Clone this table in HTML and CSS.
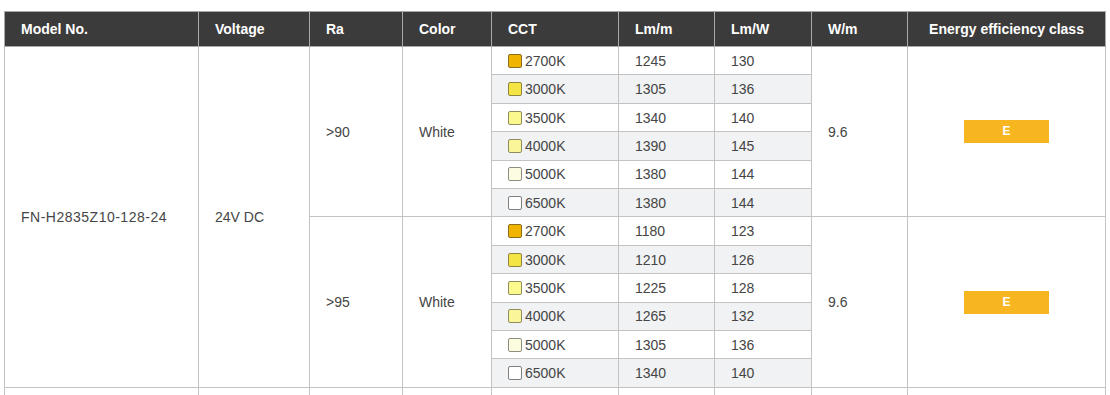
FILE: index.html
```html
<!DOCTYPE html>
<html>
<head>
<meta charset="utf-8">
<link rel="stylesheet" href="styles.css">
</head>
<body>
<div class="wrap">
<table class="spec">
  <colgroup>
    <col class="c-model"><col class="c-volt"><col class="c-ra"><col class="c-color"><col class="c-cct"><col class="c-lmm"><col class="c-lmw"><col class="c-wm"><col class="c-eec">
  </colgroup>
  <thead>
    <tr>
      <th>Model No.</th><th>Voltage</th><th>Ra</th><th>Color</th><th>CCT</th><th>Lm/m</th><th>Lm/W</th><th>W/m</th><th class="center">Energy efficiency class</th>
    </tr>
  </thead>
  <tbody>
    <tr>
      <td rowspan="12" class="model">FN-H2835Z10-128-24</td>
      <td rowspan="12">24V DC</td>
      <td rowspan="6">&gt;90</td>
      <td rowspan="6">White</td>
      <td><span class="sw k2700"></span>2700K</td><td>1245</td><td>130</td>
      <td rowspan="6">9.6</td>
      <td rowspan="6" class="center"><span class="badge">E</span></td>
    </tr>
    <tr class="alt"><td><span class="sw k3000"></span>3000K</td><td>1305</td><td>136</td></tr>
    <tr><td><span class="sw k3500"></span>3500K</td><td>1340</td><td>140</td></tr>
    <tr class="alt"><td><span class="sw k4000"></span>4000K</td><td>1390</td><td>145</td></tr>
    <tr><td><span class="sw k5000"></span>5000K</td><td>1380</td><td>144</td></tr>
    <tr class="alt"><td><span class="sw k6500"></span>6500K</td><td>1380</td><td>144</td></tr>
    <tr>
      <td rowspan="6">&gt;95</td>
      <td rowspan="6">White</td>
      <td><span class="sw k2700"></span>2700K</td><td>1180</td><td>123</td>
      <td rowspan="6">9.6</td>
      <td rowspan="6" class="center"><span class="badge">E</span></td>
    </tr>
    <tr class="alt"><td><span class="sw k3000"></span>3000K</td><td>1210</td><td>126</td></tr>
    <tr><td><span class="sw k3500"></span>3500K</td><td>1225</td><td>128</td></tr>
    <tr class="alt"><td><span class="sw k4000"></span>4000K</td><td>1265</td><td>132</td></tr>
    <tr><td><span class="sw k5000"></span>5000K</td><td>1305</td><td>136</td></tr>
    <tr class="alt"><td><span class="sw k6500"></span>6500K</td><td>1340</td><td>140</td></tr>
    <tr class="next">
      <td></td><td></td><td></td><td></td><td></td><td></td><td></td><td></td><td></td>
    </tr>
  </tbody>
</table>
</div>
</body>
</html>
```

FILE: styles.css
```css
html, body {
  margin: 0;
  padding: 0;
  background: #ffffff;
  height: 395px;
  overflow: hidden;
}

.wrap {
  padding: 11px 0 0 4px;
}

.spec {
  border-collapse: collapse;
  table-layout: fixed;
  width: 1101px;
  font-family: "Liberation Sans", Arial, sans-serif;
  font-size: 14px;
  color: #454545;
}

.c-model { width: 194px; }
.c-volt { width: 111px; }
.c-ra { width: 93px; }
.c-color { width: 89px; }
.c-cct { width: 127px; }
.c-lmm { width: 96px; }
.c-lmw { width: 97px; }
.c-wm { width: 96px; }
.c-eec { width: 198px; }

.spec th {
  background: #3b3b3b;
  color: #ffffff;
  font-weight: bold;
  font-size: 14px;
  text-align: left;
  height: 35px;
  padding: 0 0 0 16px;
  border: 1px solid #a9a9a9;
  box-sizing: border-box;
}

.spec td {
  border: 1px solid #c3c3c3;
  height: 28.42px;
  padding: 0 0 0 16px;
  vertical-align: middle;
  box-sizing: border-box;
  background: #ffffff;
  white-space: nowrap;
}

.spec td.model {
  letter-spacing: 0.5px;
}

.spec tr.alt td {
  background: #f1f2f3;
}

.spec .center {
  text-align: center;
  padding-left: 0;
}

.spec tr.next td {
  height: 30px;
}

.sw {
  display: inline-block;
  width: 12px;
  height: 12px;
  border: 1px solid #7d7a6a;
  border-radius: 2px;
  margin-right: 3px;
  vertical-align: -2px;
}

.k2700 { background: #f0b300; border-color: #8a6d1e; }
.k3000 { background: #f4e545; border-color: #8c8440; }
.k3500 { background: #fbf88e; border-color: #8f8c5e; }
.k4000 { background: #fbf59a; border-color: #8f8c62; }
.k5000 { background: #fcfce0; border-color: #8d8d80; }
.k6500 { background: #ffffff; border-color: #7f7f7f; }

.badge {
  display: inline-block;
  width: 85px;
  height: 23px;
  line-height: 23px;
  background: #f7b520;
  color: #ffffff;
  font-weight: bold;
  font-size: 12px;
  text-align: center;
  vertical-align: middle;
}
```
